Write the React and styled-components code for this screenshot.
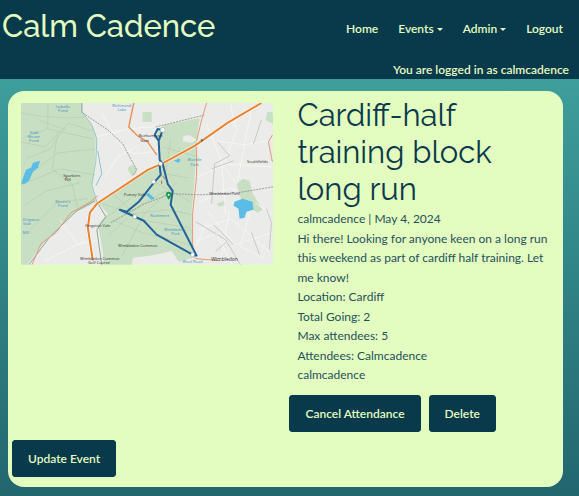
import React from "react";
import styled, { createGlobalStyle } from "styled-components";

const navy = "#083a4b";
const lime = "#e3fcc0";

const GlobalStyle = createGlobalStyle`
  * { box-sizing: border-box; }
  html { min-height: 100%; background: linear-gradient(#43a9a3, #22666e) no-repeat; }
  body {
    margin: 0;
    font-family: Lato, "Liberation Sans", sans-serif;
    font-size: 12px;
    line-height: 1.63;
    color: ${navy};
  }
`;

const Header = styled.header`
  background: ${navy};
  color: ${lime};
`;

const NavBar = styled.div`
  display: flex;
  justify-content: space-between;
  align-items: flex-start;
  min-height: 60px;
  padding: 4px 8px 0 2px;
`;

const Brand = styled.a`
  font-family: Raleway, Lato, sans-serif;
  font-size: 31px;
  font-weight: 500;
  line-height: 44px;
  color: ${lime};
  text-decoration: none;
  white-space: nowrap;
`;

const NavList = styled.ul`
  display: flex;
  gap: 4px;
  margin: 15px 0 0;
  padding: 0;
  list-style: none;
`;

const navItem = `
  display: flex;
  align-items: center;
  gap: 3px;
  padding: 0 8px;
  border: 0;
  background: none;
  color: ${lime};
  font: inherit;
  font-weight: 600;
  line-height: 20px;
  text-decoration: none;
  cursor: pointer;
`;

const NavLink = styled.a`${navItem}`;
const NavToggle = styled.button`
  ${navItem}
  &::after {
    content: "";
    border: 3px solid transparent;
    border-top-color: currentColor;
    border-bottom: 0;
  }
`;

const Status = styled.p`
  margin: 0;
  padding: 0 10px 0 0;
  text-align: right;
  font-weight: 600;
  line-height: 19px;
`;

const Card = styled.main`
  margin: 12px 16px 0 8px;
  padding: 6px 4px 10px;
  border-radius: 16px;
  background: ${lime};
`;

const Columns = styled.div`
  display: grid;
  grid-template-columns: 25fr 26fr;
  column-gap: 16px;
  padding: 0 7px 0 9px;
`;

const MapFigure = styled.figure`
  margin: 6px 0 0;
  svg { display: block; width: 100%; height: auto; }
`;

const Details = styled.section`
  padding-left: 8px;
`;

const Title = styled.h1`
  margin: 0 0 1px;
  font-family: Raleway, Lato, sans-serif;
  font-size: 31px;
  font-weight: 450;
  line-height: 37px;
`;

const Text = styled.p`
  margin: 0;
  color: #24535a;
`;

const Actions = styled.div`
  display: flex;
  flex-wrap: wrap;
  gap: 8px;
  margin: 10px 0 8px;
`;

const Button = styled.button`
  padding: 0 15px;
  border: 1px solid ${navy};
  border-radius: 3px;
  background: ${navy};
  color: ${lime};
  font: inherit;
  font-weight: 600;
  line-height: 35px;
  cursor: pointer;
`;

const MapLabel = styled.text`
  font-family: "Open Sans", sans-serif;
  font-size: ${({ $size = 4 }) => $size}px;
  fill: ${({ $water }) => ($water ? "#3f8fc0" : "#333")};
  text-anchor: middle;
`;

function RouteMap() {
  return (
    <svg viewBox="21 103 253 162" role="img" aria-label="Map of the running route">
      <rect x="21" y="103" width="253" height="162" fill="#ebebe9" />
      <g fill="#c9dfc3">
        <path d="M21 103H82L83 113L92 125L96 135L95 161L92 187L97 202L75 213L48 238L27 265H21Z" />
        <path d="M97 202L134 181L160 163L158 131L165 125L200 118L197 141L195 180L192 213L193 247L197 257L179 262L172 251L165 253L150 256L133 258L132 265H104L103 250L98 225L108 214Z" />
        <path d="M128 168l4-3 5 3-1 6-4 2-3-4zM237 184l6-5 7 2 3 12 10 17-5 3-16-12zM217 204l8-3 1 4-7 2zM273 112h-5l-2 8 8 4zM143 112h9v10h-9z" />
      </g>
      <path d="M184 136l6-1 7 5-6 3-8-2z" fill="#ebebe9" />
      <g fill="none" stroke="#b4ccb0" strokeWidth=".7">
        <path d="M21 113l18 3 28 2 17-1M48 105v24l-23 8M48 129l45 10M26 159l24-10 18-26 24 8M31 173l27-20 37-4M39 120l27 10M21 185l39-16 35 6M25 205l22-14 33-8M58 131l-6 39M30 230l28-28 30-3M53 170l19 14 6 24M21 142l24 5 16-16" />
        <path d="M103 204l30 10 35-4 25 5M112 192l28 28 49 8M109 236l32-31 26-14M122 257l22-42 33-32M112 220l31 13 51 13M101 222l34-27M171 139l-5 35 22 4M151 180l40 22M163 147l35 10" />
      </g>
      <g fill="none" stroke="#f8f8f6" strokeWidth=".8">
        <path d="M102 113l18 32 14 9 27-3M96 137l33-8 31-3M105 178l12-20 21-12M207 125l15 36 4 53M216 141l30 4 27-5M198 177l30-13 44 3M222 164l15 20M199 203l31-15 8 3M256 203l16 12M199 230l32-11 39 33M207 210l28 35 38-12M231 104l6 26-12 33M253 105l-6 28-9 50M197 241l20-7 15 30M207 222l-10 24M251 210l-10 37 24 12M60 220l18 25 22-5M45 261l40-20M230 210l-9 51" />
      </g>
      <g fill="none" stroke="#c8c8c8" strokeWidth="1">
        <path d="M218 142l12 14-15 8-3 40M262 120l-8 24M212 169l22-8M196 222l30 18 15 25M214 225l20 20M252 233l8 22M216 252l10-9M267 209l5 14-2 27" />
      </g>
      <g fill="none" stroke="#8da79b" strokeWidth="1">
        <path d="M82 103v10M97 202l9 15-9 13 5 36M95 201l-18 10-27 26-21 28" />
        <path d="M83 113l9 12 5 14-1 22-4 24 5 17" stroke="#9ac9bf" />
        <path d="M98 151l4 23-6 12" stroke="#8cc4d4" />
      </g>
      <path d="M83 113l25 17 15 14 14 26-4 6M156 127l49-12M111 223l34-19 26-10 30 1 37-2 36-6" fill="none" stroke="#888" strokeWidth=".8" strokeDasharray="2 1" />
      <g fill="#5bbce6">
        <path d="M21 184l5-14 5-2 2-5 7-2-2 7-5 4-4 9-4 3zM235 202l8-3 10 3 1 8-7 2-2 6-5 1-1-10-5-3zM174 161l5-2 2 1-2 3zM146 195l3-2 6 6-3 1z" />
      </g>
      <g fill="none" stroke="#e29b76" strokeWidth="1">
        <path d="M32 265l9-21 15-11 15-20 18-10 9-7M207 103l-5 17-5 21M197 147v30l-4 36v35M192 253l4 6 24 2M273 135l-4 7 4 20" />
      </g>
      <path d="M134 103l-5 24 9 9 10 6 9 13" fill="none" stroke="#e89055" strokeWidth="1.4" />
      <path d="M93 261l-5-33 2-15 7-9 51-34 14-6 33-18 33-23 34-20" fill="none" stroke="#fff" strokeWidth="3" />
      <path d="M93 261l-5-33 2-15 7-9 51-34 14-6 33-18 33-23 34-20" fill="none" stroke="#e8822f" strokeWidth="2" />
      <path d="M163 130l-5-1-3 6 4 6 1 19 3 4 5 20 5 7-2 14 26 51-4-1-36-20-13-14-24-11 7 2 12-10 15-19 7-8-1-9M163 130l-4 11" fill="none" stroke="#226498" strokeWidth="2" strokeLinejoin="round" strokeLinecap="round" />
      <g fill="#fff" stroke="#7e8f98" strokeWidth=".4">
        <circle cx="163" cy="130" r="2.5" /><circle cx="161" cy="164" r="2" />
        <circle cx="154" cy="182" r="2" /><circle cx="135" cy="217" r="2" /><circle cx="193" cy="255" r="2" />
      </g>
      <path d="M169 200c-3-4-4-8 0-8s3 4 0 8z" fill="#15984b" />
      <circle cx="169" cy="195" r="1" fill="#fff" />
      <path d="M201 139l3 1-2 2z" fill="#47724a" />
      <path d="M65 180l2-3M162 181v3M163 176l2 3" stroke="#b5433c" strokeWidth=".8" />
      <MapLabel $water x="63" y="108">Isabella</MapLabel><MapLabel $water x="63" y="112">Pond</MapLabel>
      <MapLabel $water x="122" y="107">Richmond</MapLabel><MapLabel $water x="122" y="111">Lake</MapLabel>
      <MapLabel $water x="34" y="134">Kidd</MapLabel><MapLabel $water x="34" y="138">Brown</MapLabel><MapLabel $water x="34" y="142">Pond</MapLabel>
      <MapLabel $water x="63" y="203">Martin's</MapLabel><MapLabel $water x="63" y="207">Pond</MapLabel>
      <MapLabel $water x="31" y="221">Kingston</MapLabel><MapLabel $water x="27" y="225">Vale</MapLabel><MapLabel $water x="26" y="234">Mill</MapLabel>
      <MapLabel $water x="195" y="161">Wandle</MapLabel><MapLabel $water x="195" y="166">Park</MapLabel>
      <MapLabel $water x="160" y="217">Rushmere</MapLabel><MapLabel $water x="175" y="231">Wimbledon</MapLabel><MapLabel $water x="176" y="235">Park</MapLabel>
      <MapLabel $water x="193" y="263">Wool Road</MapLabel>
      <MapLabel x="151" y="137">Roehampton</MapLabel><MapLabel x="145" y="142">Gate</MapLabel>
      <MapLabel x="72" y="177">Spankers</MapLabel><MapLabel x="68" y="181">Hill</MapLabel>
      <MapLabel x="258" y="163">Southfields</MapLabel>
      <MapLabel x="135" y="196">Putney Vale</MapLabel>
      <MapLabel x="225" y="195">Wimbledon Park</MapLabel>
      <MapLabel x="98" y="227">Kingston Vale</MapLabel>
      <MapLabel x="138" y="247">Wimbledon Common</MapLabel>
      <MapLabel x="100" y="260">Wimbledon Common</MapLabel><MapLabel x="99" y="264">Golf Course</MapLabel>
      <MapLabel x="225" y="261" $size={5}>Wimbledon</MapLabel>
    </svg>
  );
}

export default function App() {
  return (
    <>
      <GlobalStyle />
      <Header>
        <NavBar>
          <Brand href="#home">Calm Cadence</Brand>
          <nav aria-label="Main">
            <NavList>
              <li><NavLink href="#home">Home</NavLink></li>
              <li><NavToggle type="button" aria-haspopup="true">Events</NavToggle></li>
              <li><NavToggle type="button" aria-haspopup="true">Admin</NavToggle></li>
              <li><NavLink href="#logout">Logout</NavLink></li>
            </NavList>
          </nav>
        </NavBar>
        <Status>You are logged in as calmcadence</Status>
      </Header>
      <Card>
        <Columns>
          <MapFigure><RouteMap /></MapFigure>
          <div>
            <Details>
              <Title>Cardiff-half training block long run</Title>
              <Text>calmcadence | May 4, 2024</Text>
              <Text>Hi there! Looking for anyone keen on a long run this weekend as part of cardiff half training. Let me know!</Text>
              <Text>Location: Cardiff</Text>
              <Text>Total Going: 2</Text>
              <Text>Max attendees: 5</Text>
              <Text>Attendees: Calmcadence</Text>
              <Text>calmcadence</Text>
            </Details>
            <Actions>
              <Button type="button">Cancel Attendance</Button>
              <Button type="button">Delete</Button>
            </Actions>
          </div>
        </Columns>
        <Button type="button">Update Event</Button>
      </Card>
    </>
  );
}
